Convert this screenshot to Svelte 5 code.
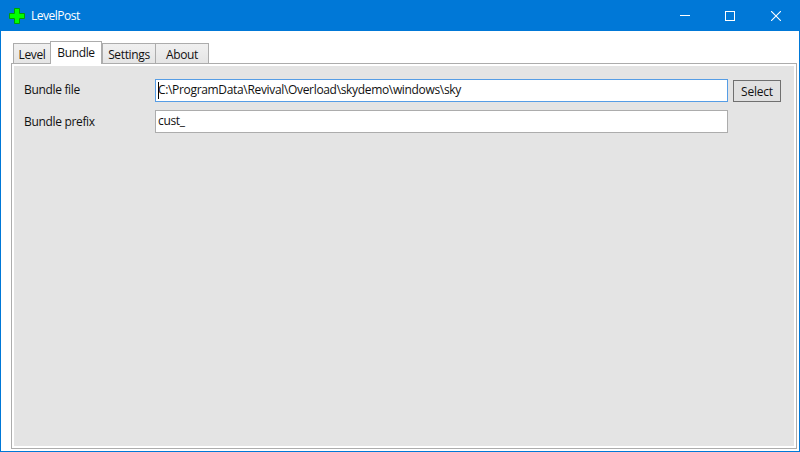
<script lang="ts">
	let tabs = ['Level', 'Bundle', 'Settings', 'About'];
	let activeTab = $state('Bundle');
	let bundleFile = $state('C:\\ProgramData\\Revival\\Overload\\skydemo\\windows\\sky');
	let bundlePrefix = $state('cust_');
</script>

<div class="window">
	<header class="titlebar">
		<!-- App icon: green cross -->
		<svg class="app-icon" width="16" height="16" viewBox="0 0 16 16">
			<path d="M5.5 .5H10.5V5.5H15.5V10.5H10.5V15.5H5.5V10.5H.5V5.5H5.5Z" fill="#00ff00" stroke="#00a000" />
		</svg>
		<span class="title">LevelPost</span>
		<div class="controls">
			<div class="control">
				<svg width="11" height="11" viewBox="0 0 11 11"><path d="M1 5.5H11" stroke="#fff" /></svg>
			</div>
			<div class="control">
				<svg width="10" height="10" viewBox="0 0 10 10"><rect x=".5" y=".5" width="9" height="9" fill="none" stroke="#fff" /></svg>
			</div>
			<div class="control">
				<svg width="10" height="10" viewBox="0 0 10 10"><path d="M0 0L10 10M10 0L0 10" stroke="#fff" stroke-width="1.1" /></svg>
			</div>
		</div>
	</header>

	<main class="content">
		<nav class="tabs">
			{#each tabs as tab}
				<button class="tab tab-{tab.toLowerCase()}" class:active={tab === activeTab} onclick={() => (activeTab = tab)}>{tab}</button>
			{/each}
		</nav>
		<section class="panel">
			<div class="form">
				<label class="label first" for="bundle-file">Bundle file</label>
				<div class="field">
					<input id="bundle-file" class="input focused" bind:value={bundleFile} />
					<span class="caret"></span>
				</div>
				<button class="select">Select</button>
				<label class="label" for="bundle-prefix">Bundle prefix</label>
				<div class="field">
					<input id="bundle-prefix" class="input" bind:value={bundlePrefix} />
				</div>
			</div>
		</section>
	</main>
</div>

<style>
	:global(body) {
		margin: 0;
		background: #fff;
	}

	.window {
		width: 800px;
		height: 452px;
		box-sizing: border-box;
		border: 1px solid #0078d7;
		border-top: none;
		display: flex;
		flex-direction: column;
		font-family: 'Open Sans', 'Noto Sans', sans-serif;
		font-size: 12px;
		color: #111;
		background: #fff;
	}

	.titlebar {
		height: 31px;
		flex: none;
		background: #0078d7;
		display: flex;
		align-items: center;
		padding-left: 8px;
		color: #fff;
	}

	.app-icon {
		margin-right: 6px;
	}

	.title {
		font-size: 12px;
		letter-spacing: -0.5px;
	}

	.controls {
		margin-left: auto;
		display: flex;
	}

	.control {
		width: 46px;
		height: 31px;
		display: flex;
		align-items: center;
		justify-content: center;
	}

	.content {
		flex: 1;
		min-height: 0;
		display: flex;
		flex-direction: column;
		padding: 10px 2px 2px 10px;
	}

	.tabs {
		display: flex;
		align-items: flex-end;
		height: 23px;
		padding-left: 2px;
		position: relative;
		z-index: 1;
	}

	.tab {
		box-sizing: border-box;
		height: 20px;
		margin: 0 0 1px;
		padding: 2px 0 0;
		border: 1px solid #acacac;
		border-bottom: none;
		border-right: none;
		background: linear-gradient(180deg, #f0f0f0, #e5e5e5);
		font: inherit;
		color: inherit;
		letter-spacing: -0.35px;
	}

	.tab-level {
		width: 37px;
	}

	.tab-bundle {
		width: 52px;
	}

	.tab-settings {
		width: 53px;
	}

	.tab-about {
		width: 54px;
		border-right: 1px solid #acacac;
	}

	.tab.active {
		height: 23px;
		margin-bottom: 0;
		background: #fff;
		border-right: 1px solid #acacac;
		padding: 1px 0 2px;
	}

	.panel {
		flex: 1;
		min-height: 0;
		box-sizing: border-box;
		border: 1px solid #acacac;
		padding: 2px;
		background: #fff;
		margin-top: -1px;
		display: flex;
	}

	.form {
		flex: 1;
		background: #e4e4e4;
		padding: 13px 13px 0 10px;
		display: grid;
		grid-template-columns: 131px 573px 48px;
		column-gap: 0;
		row-gap: 8px;
		grid-auto-rows: 23px;
		align-content: start;
		align-items: center;
	}

	.label {
		letter-spacing: -0.33px;
	}

	.label.first {
		padding-bottom: 2px;
	}

	.field {
		position: relative;
		height: 23px;
	}

	.input {
		box-sizing: border-box;
		width: 100%;
		height: 23px;
		border: 1px solid #acacac;
		padding: 0 2px 2px;
		margin: 0;
		outline: none;
		background: #fff;
		font: inherit;
		color: inherit;
		letter-spacing: -0.33px;
	}

	.input.focused {
		border-color: #569de5;
	}

	.caret {
		position: absolute;
		left: 3px;
		top: 3px;
		width: 1px;
		height: 17px;
		background: #000;
	}

	.select {
		box-sizing: border-box;
		width: 48px;
		height: 22px;
		margin: 1px 0 0 5px;
		padding: 0;
		border: 1px solid #707070;
		background: #e1e1e1;
		font: inherit;
		color: inherit;
		letter-spacing: -0.2px;
		justify-self: start;
	}
</style>
